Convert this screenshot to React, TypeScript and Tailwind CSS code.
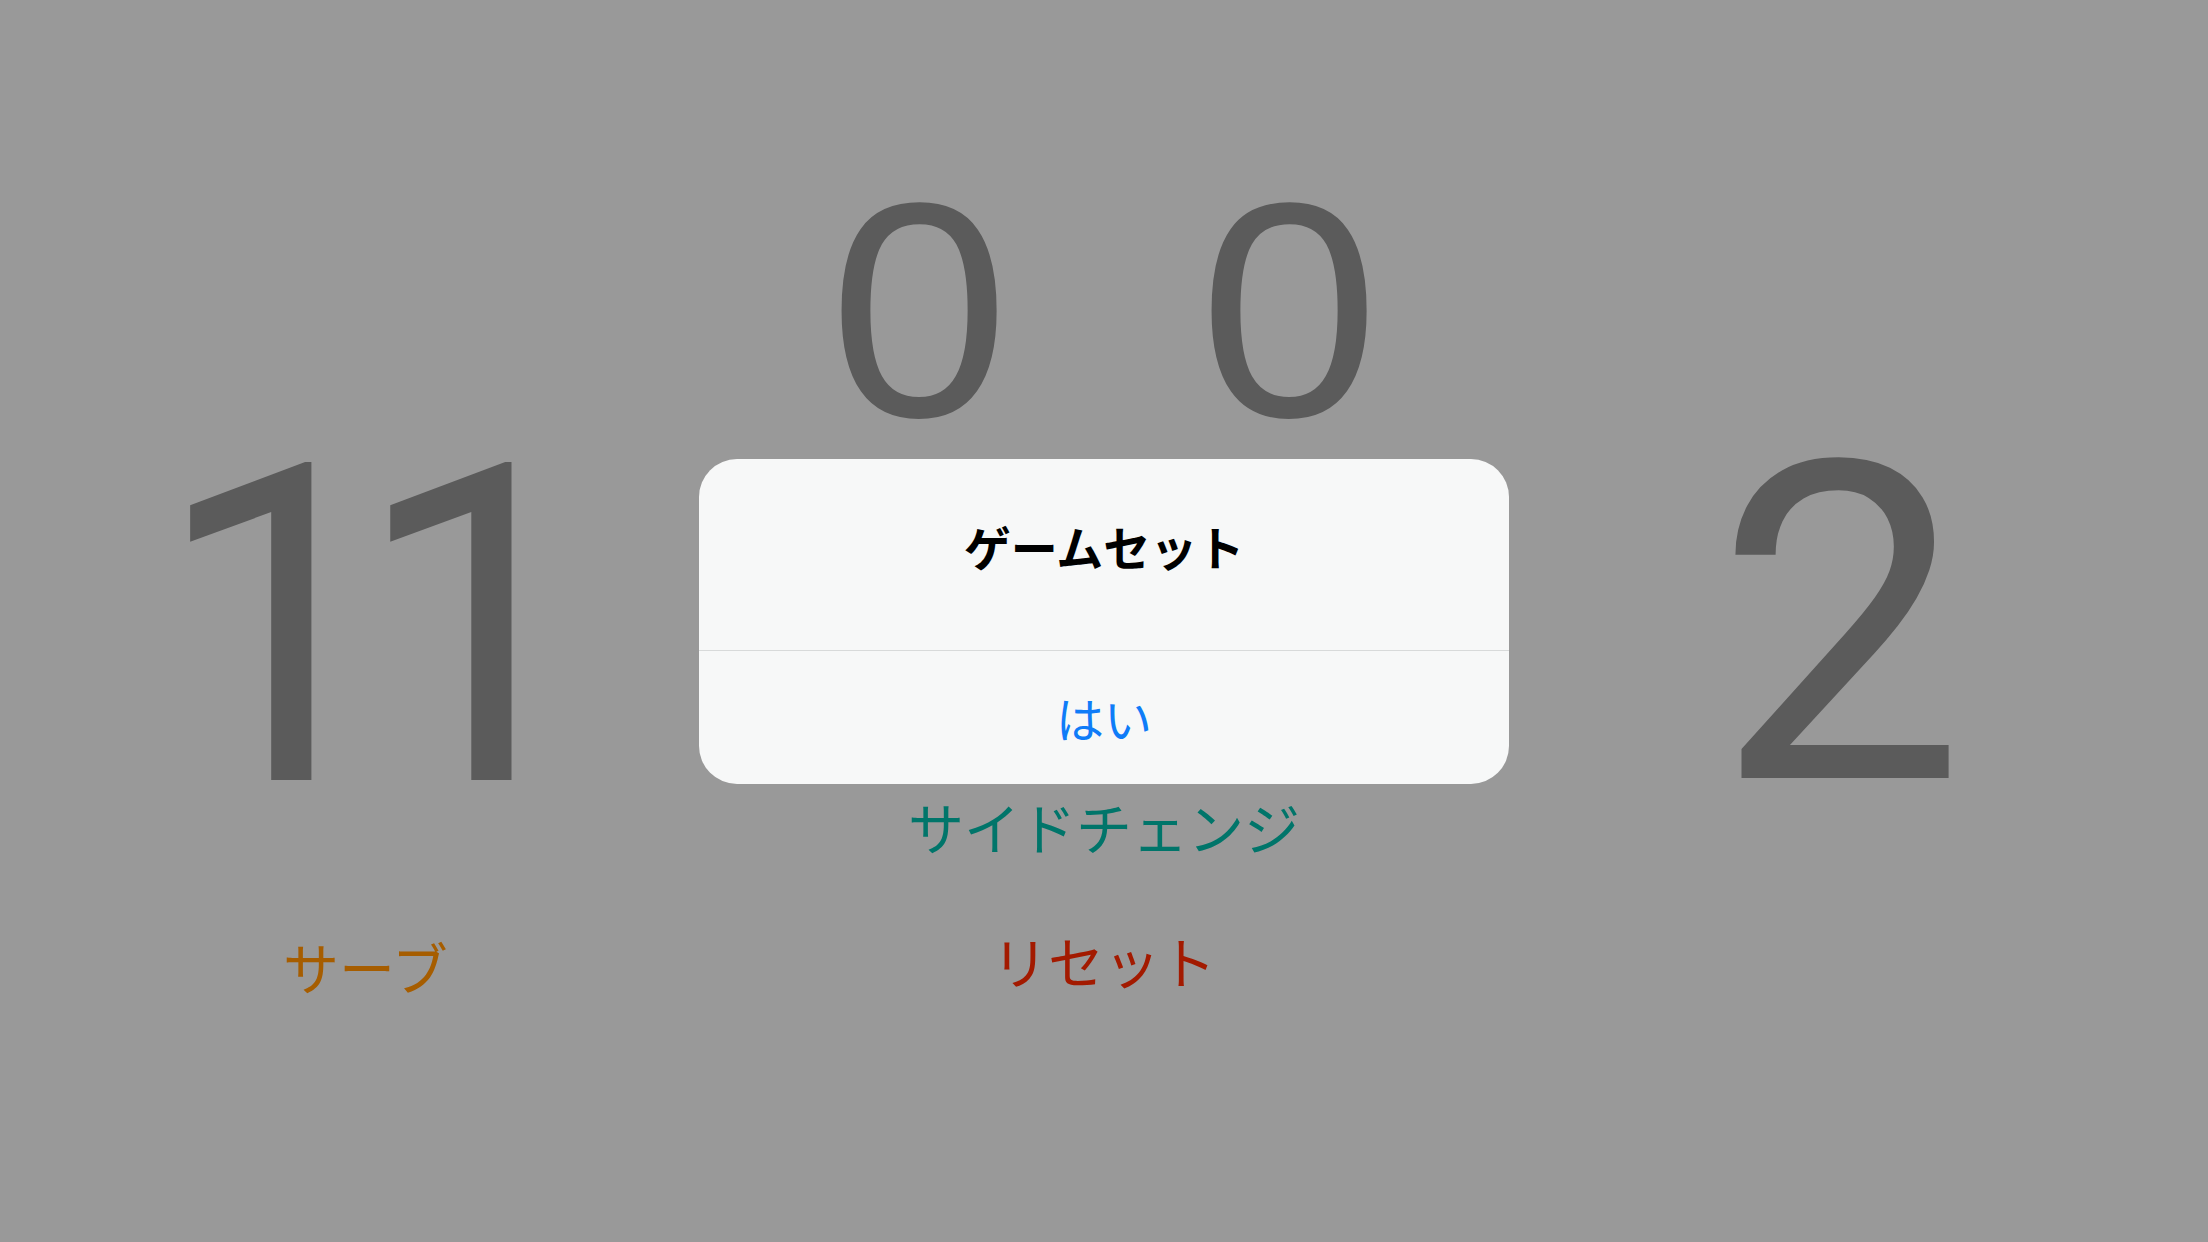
import React from "react";

const digitFont = "font-['Roboto','Liberation_Sans',sans-serif]";
const zeroFont = "font-['Liberation_Sans',Arial,sans-serif]";
const jpFont = "font-['Noto_Sans_CJK_JP','Noto_Sans',sans-serif]";

function ScoreBoard() {
  return (
    <div className="flex h-full w-full">
      {/* left team */}
      <div className="flex w-[700px] flex-col pt-[406px]">
        <div className={`${digitFont} pl-[153px] text-[445px] leading-none tracking-[-50px] text-[#5b5b5b]`}>
          11
        </div>
        <div className={`${jpFont} mt-[87px] pl-[283px] text-[56px] leading-none text-[#a65d00]`}>
          サーブ
        </div>
      </div>

      {/* center */}
      <div className="flex w-[808px] flex-col items-center pt-[157px]">
        <div className={`${zeroFont} flex gap-[199px] text-[306px] leading-none text-[#5b5b5b]`}>
          <span className="scale-x-[1.06]">0</span>
          <span className="scale-x-[1.06]">0</span>
        </div>
        <div className={`${jpFont} mt-[335px] text-[56px] leading-none text-[#00756a]`}>
          サイドチェンジ
        </div>
        <div className={`${jpFont} mt-[78px] text-[56px] leading-none text-[#a31a00]`}>
          リセット
        </div>
      </div>

      {/* right team */}
      <div className="flex flex-1 flex-col pt-[404px] pl-[207px]">
        <div className={`${digitFont} text-[445px] leading-none text-[#5b5b5b]`}>2</div>
      </div>
    </div>
  );
}

function GameSetAlert() {
  return (
    <div className="absolute inset-0 flex items-center justify-center">
      <div className="flex h-[325px] w-[810px] flex-col overflow-hidden rounded-[38px] bg-[#f7f8f8]">
        <div className="flex h-[192px] justify-center border-b border-[#d8dada] pt-[63px]">
          <span className={`${jpFont} text-[47px] font-semibold leading-none text-black`}>
            ゲームセット
          </span>
        </div>
        <button className="flex flex-1 items-center justify-center">
          <span className={`${jpFont} text-[48px] leading-none text-[#0f7cf8]`}>はい</span>
        </button>
      </div>
    </div>
  );
}

export default function App() {
  return (
    <div className="relative h-[1242px] w-[2208px] overflow-hidden bg-[#999999]">
      <ScoreBoard />
      <GameSetAlert />
    </div>
  );
}
